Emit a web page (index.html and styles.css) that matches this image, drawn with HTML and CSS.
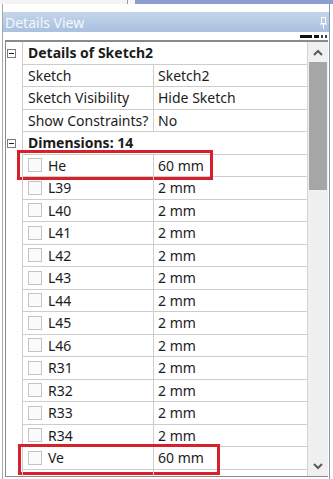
FILE: index.html
```html
<!DOCTYPE html>
<html lang="en">
<head>
  <title>Details View</title>
  <link rel="stylesheet" href="styles.css">
</head>
<body>

  <div class="tabs">
    <div class="tab-left"></div>
    <div class="tab-gap"></div>
    <div class="tab-right"></div>
  </div>

  <div class="pane">
    <div class="title">
      <span>Details View</span>
      <svg class="pin" width="7" height="12" viewBox="0 0 7 12">
        <rect x="1.5" y="0.5" width="4" height="6" fill="none" stroke="#ffffff"/>
        <line x1="0" y1="7" x2="7" y2="7" stroke="#ffffff"/>
        <line x1="3.5" y1="7" x2="3.5" y2="12" stroke="#ffffff"/>
      </svg>
    </div>

    <div class="tools">
      <i class="bar wide"></i><i class="bar"></i><i class="bar thin"></i><i class="bar thin"></i>
    </div>

    <div class="frame">
      <div class="grid">
        <div class="row cat">
          <div class="tree"><span class="minus"></span></div>
          <div class="label">Details of Sketch2</div>
        </div>
        <div class="row">
          <div class="tree"></div>
          <div class="name">Sketch</div>
          <div class="value">Sketch2</div>
        </div>
        <div class="row">
          <div class="tree"></div>
          <div class="name">Sketch Visibility</div>
          <div class="value">Hide Sketch</div>
        </div>
        <div class="row">
          <div class="tree"></div>
          <div class="name">Show Constraints?</div>
          <div class="value">No</div>
        </div>
        <div class="row cat">
          <div class="tree"><span class="minus"></span></div>
          <div class="label">Dimensions: 14</div>
        </div>
        <div class="row">
          <div class="tree"></div>
          <div class="name"><span class="check"></span>He</div>
          <div class="value">60 mm</div>
          <span class="mark mark-he"></span>
        </div>
        <div class="row"><div class="tree"></div><div class="name"><span class="check"></span>L39</div><div class="value">2 mm</div></div>
        <div class="row"><div class="tree"></div><div class="name"><span class="check"></span>L40</div><div class="value">2 mm</div></div>
        <div class="row"><div class="tree"></div><div class="name"><span class="check"></span>L41</div><div class="value">2 mm</div></div>
        <div class="row"><div class="tree"></div><div class="name"><span class="check"></span>L42</div><div class="value">2 mm</div></div>
        <div class="row"><div class="tree"></div><div class="name"><span class="check"></span>L43</div><div class="value">2 mm</div></div>
        <div class="row"><div class="tree"></div><div class="name"><span class="check"></span>L44</div><div class="value">2 mm</div></div>
        <div class="row"><div class="tree"></div><div class="name"><span class="check"></span>L45</div><div class="value">2 mm</div></div>
        <div class="row"><div class="tree"></div><div class="name"><span class="check"></span>L46</div><div class="value">2 mm</div></div>
        <div class="row"><div class="tree"></div><div class="name"><span class="check"></span>R31</div><div class="value">2 mm</div></div>
        <div class="row"><div class="tree"></div><div class="name"><span class="check"></span>R32</div><div class="value">2 mm</div></div>
        <div class="row"><div class="tree"></div><div class="name"><span class="check"></span>R33</div><div class="value">2 mm</div></div>
        <div class="row"><div class="tree"></div><div class="name"><span class="check"></span>R34</div><div class="value">2 mm</div></div>
        <div class="row">
          <div class="tree"></div>
          <div class="name"><span class="check"></span>Ve</div>
          <div class="value">60 mm</div>
          <span class="mark mark-ve"></span>
        </div>
        <div class="row"><div class="tree"></div><div class="name"></div><div class="value"></div></div>
      </div>

      <div class="scroll">
        <div class="arrow">
          <svg width="10" height="7" viewBox="0 0 10 7"><polyline points="1,6 5,2 9,6" fill="none" stroke="#5a5a5a" stroke-width="2"/></svg>
        </div>
        <div class="thumb"></div>
        <div class="track"></div>
        <div class="arrow">
          <svg width="10" height="7" viewBox="0 0 10 7"><polyline points="1,1 5,5 9,1" fill="none" stroke="#5a5a5a" stroke-width="2"/></svg>
        </div>
      </div>
    </div>
  </div>

</body>
</html>
```

FILE: styles.css
```css
body {
  margin: 0;
  background-color: #ffffff;
  font-family: "Noto Sans", "Open Sans", sans-serif;
  font-size: 14px;
  color: #1c1c1c;
  width: 333px;
  height: 479px;
  overflow: hidden;
}

.tabs {
  display: flex;
  height: 4px;
}

.tab-left {
  width: 127px;
  background-color: #f3f3f3;
  border-right: 1px solid #9c9c9c;
}

.tab-gap {
  width: 7px;
  background-color: #f7f7f7;
}

.tab-right {
  flex: 1;
  background-color: #8e9dd2;
}

.pane {
  margin: 0 3px 0 2px;
  padding-top: 8px;
  border-left: 1px solid #a6a6a6;
  border-right: 1px solid #8391bb;
  height: 475px;
  box-sizing: border-box;
}

.title {
  height: 20px;
  background: linear-gradient(#c4d5eb, #aac0df);
  color: #f4f7fc;
  font-size: 14px;
  display: flex;
  align-items: center;
  justify-content: space-between;
  padding: 0 2px 0 2px;
}

.pin {
  margin-top: 2px;
}

.tools {
  height: 8px;
  display: flex;
  justify-content: flex-end;
  align-items: center;
  gap: 2px;
  padding-right: 2px;
}

.bar {
  display: block;
  width: 5px;
  height: 3px;
  background-color: #111111;
}

.bar.wide {
  width: 12px;
}

.bar.thin {
  width: 2px;
  background-color: #444444;
}

.frame {
  display: flex;
  margin: 0 1px 0 2px;
  height: 437px;
  box-sizing: border-box;
  border-top: 2px solid #8a8a8a;
  border-left: 1px solid #8a8a8a;
  border-bottom: 1px solid #8a8a8a;
}

.grid {
  width: 301px;
  overflow: hidden;
}

.row {
  position: relative;
  display: grid;
  grid-template-columns: 16px 131px 1fr;
  height: 22.5px;
}

.tree {
  display: flex;
  align-items: center;
  padding-left: 1px;
}

.name, .value, .label {
  display: flex;
  align-items: center;
  border-left: 1px solid #cdcdcd;
  border-bottom: 1px solid #cdcdcd;
  white-space: nowrap;
}

.name {
  padding-left: 5px;
}

.value {
  padding-left: 4px;
}

.label {
  grid-column: 2 / 4;
  padding-left: 5px;
  font-weight: bold;
}

.minus {
  position: relative;
  width: 7px;
  height: 7px;
  border: 1px solid #7a7a7a;
  background-color: #ffffff;
}

.minus::after {
  content: "";
  position: absolute;
  left: 1px;
  top: 3px;
  width: 5px;
  height: 1px;
  background-color: #222222;
}

.check {
  width: 12px;
  height: 12px;
  border: 1px solid #c4c4c4;
  background-color: #fbfbfb;
  margin-right: 6px;
}

.mark {
  position: absolute;
  border: 3px solid #d8202c;
  box-sizing: border-box;
}

.mark-he {
  left: 11px;
  top: -5px;
  width: 196px;
  height: 30px;
}

.mark-ve {
  left: 12px;
  top: -3px;
  width: 202px;
  height: 31px;
}

.scroll {
  flex: 1;
  display: flex;
  flex-direction: column;
  background-color: #f0f0f0;
  border-left: 1px solid #d4d4d4;
}

.arrow {
  height: 20px;
  display: flex;
  align-items: center;
  justify-content: center;
}

.thumb {
  height: 128px;
  margin: 0 1px;
  background-color: #a6a6a6;
}

.track {
  flex: 1;
}
```
